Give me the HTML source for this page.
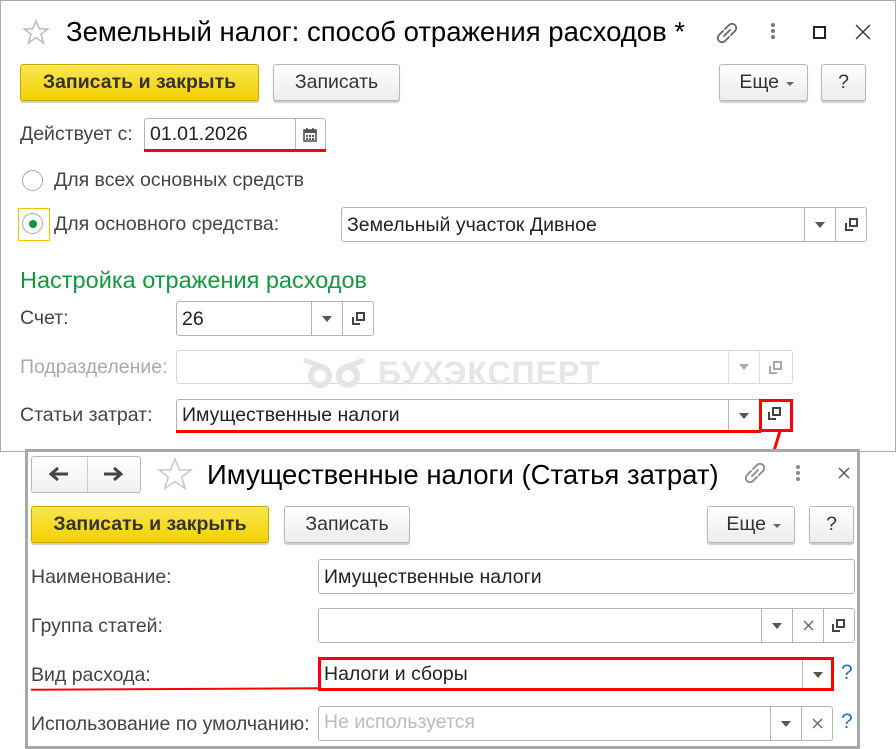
<!DOCTYPE html>
<html><head><meta charset="utf-8"><style>
*{box-sizing:border-box;margin:0;padding:0}
body{width:896px;height:748px;background:#fff;position:relative;overflow:hidden;font-family:"Liberation Sans",Arial,sans-serif;color:#333}
.a{position:absolute}
.win{position:absolute;border:1px solid #b0b0b0;background:#fff}
.title{position:absolute;font-size:27.5px;color:#000;white-space:nowrap}
.btn{position:absolute;border:1px solid #b8b8b8;border-radius:3px;background:linear-gradient(#fff,#ececec);box-shadow:0 2px 1px #ccc;font-size:19.5px;color:#333;text-align:center;line-height:34px}
.yel{background:linear-gradient(#fbe651,#f2d100);border-color:#c9a900;font-weight:bold;color:#333}
.lbl{position:absolute;font-size:19.5px;color:#444;white-space:nowrap}
.inp{position:absolute;border:1px solid #b4b4b4;border-radius:3px;background:#fff;font-size:19.5px;color:#222;padding-left:5px;line-height:31px;white-space:nowrap}
.sep{position:absolute;top:0;bottom:0;border-left:1px solid #b4b4b4}
.tri{position:absolute;width:0;height:0;border-left:5px solid transparent;border-right:5px solid transparent;border-top:6px solid #555}
.red{position:absolute;background:#f00}
</style></head><body>

<div class="win" style="left:0;top:0;width:896px;height:452px;border-color:#a8a8a8"></div>
<svg class="a" style="left:22px;top:19px" width="28" height="27" viewBox="0 0 28 27"><path d="M14 2l3.4 8h8.3l-6.8 5.2 2.6 8.6L14 18.7 6.5 23.8l2.6-8.6L2.3 10h8.3z" fill="none" stroke="#b9bec4" stroke-width="1.6"/></svg>
<div class="title" style="left:66px;top:16px">Земельный налог: способ отражения расходов *</div>
<svg class="a" style="left:713px;top:20px" width="28" height="26" viewBox="0 0 28 26"><g fill="none" stroke="#666" stroke-width="1.8" stroke-linecap="round"><path d="M12 9l4-4a4 4 0 0 1 6 6l-4 4"/><path d="M16 17l-4 4a4 4 0 0 1-6-6l4-4"/><path d="M11 16l6-6"/></g></svg>
<div class="a" style="left:771px;top:23px;width:4px;height:4px;border-radius:2px;background:#777;box-shadow:0 6px 0 #777,0 12px 0 #777"></div>
<div class="a" style="left:813px;top:26px;width:13px;height:13px;border:2px solid #222"></div>
<svg class="a" style="left:855px;top:24px" width="16" height="16"><path d="M1 1l14 14M15 1L1 15" stroke="#333" stroke-width="1.4"/></svg>

<div class="btn yel" style="left:20px;top:64px;width:239px;height:37px">Записать и закрыть</div>
<div class="btn" style="left:273px;top:64px;width:127px;height:37px">Записать</div>
<div class="btn" style="left:719px;top:64px;width:89px;height:37px;padding-right:28px;text-align:right">Еще<span class="tri" style="right:13px;top:17px;border-width:4px 4px 0 4px;border-top-color:#666"></span></div>
<div class="btn" style="left:821px;top:64px;width:45px;height:37px">?</div>

<div class="lbl" style="left:20px;top:123px">Действует с:</div>
<div class="inp" style="left:144px;top:118px;width:182px;height:34px;border-radius:3px 3px 0 0">01.01.2026<div class="sep" style="left:150px"></div>
<svg class="a" style="left:158px;top:8px" width="14" height="15"><rect x="1" y="3" width="12" height="11" fill="none" stroke="#555" stroke-width="1.6"/><rect x="1" y="3" width="12" height="3" fill="#555"/><path d="M4 1v3M10 1v3" stroke="#555" stroke-width="1.6"/><g fill="#555"><rect x="3" y="8" width="2" height="2"/><rect x="6" y="8" width="2" height="2"/><rect x="9" y="8" width="2" height="2"/><rect x="3" y="11" width="2" height="2"/><rect x="6" y="11" width="2" height="2"/><rect x="9" y="11" width="2" height="2"/></g></svg></div>
<div class="red" style="left:144px;top:149px;width:182px;height:3px"></div>

<div class="a" style="left:22px;top:170px;width:21px;height:21px;border-radius:50%;border:1px solid #aaa;background:#fff"></div>
<div class="lbl" style="left:54px;top:169px">Для всех основных средств</div>
<div class="a" style="left:18px;top:208px;width:32px;height:33px;border:1px solid #f2c200"></div>
<div class="a" style="left:22px;top:213px;width:21px;height:21px;border-radius:50%;border:1px solid #aaa;background:#fff"></div>
<div class="a" style="left:29px;top:220px;width:8px;height:8px;border-radius:50%;background:#0a9a3a"></div>
<div class="lbl" style="left:54px;top:213px">Для основного средства:</div>
<div class="inp" style="left:341px;top:207px;width:526px;height:35px;line-height:34px">Земельный участок Дивное
<div class="sep" style="left:462px"></div><div class="sep" style="left:493px"></div>
<span class="tri" style="left:473px;top:14px"></span>
<svg class="a" style="left:502px;top:9px" width="15" height="15"><path d="M2 6v7h7" fill="none" stroke="#444" stroke-width="2"/><rect x="6" y="2" width="7" height="7" fill="none" stroke="#444" stroke-width="2"/></svg></div>

<div class="a" style="left:20px;top:267px;font-size:23.5px;color:#109a3e">Настройка отражения расходов</div>

<div class="lbl" style="left:20px;top:307px">Счет:</div>
<div class="inp" style="left:176px;top:301px;width:198px;height:35px;line-height:34px">26
<div class="sep" style="left:134px"></div><div class="sep" style="left:165px"></div>
<span class="tri" style="left:145px;top:14px"></span>
<svg class="a" style="left:174px;top:9px" width="15" height="15"><path d="M2 6v7h7" fill="none" stroke="#444" stroke-width="2"/><rect x="6" y="2" width="7" height="7" fill="none" stroke="#444" stroke-width="2"/></svg></div>

<div class="lbl" style="left:20px;top:356px;color:#aaa">Подразделение:</div>
<div class="inp" style="left:176px;top:350px;width:617px;height:34px;border-color:#d6d6d6">
<div class="sep" style="left:551px;border-color:#ddd"></div><div class="sep" style="left:582px;border-color:#ddd"></div>
<span class="tri" style="left:562px;top:13px;border-top-color:#aaa"></span>
<svg class="a" style="left:591px;top:9px" width="15" height="15"><path d="M2 6v7h7" fill="none" stroke="#aaa" stroke-width="2"/><rect x="6" y="2" width="7" height="7" fill="none" stroke="#aaa" stroke-width="2"/></svg></div>
<svg class="a" style="left:300px;top:356px" width="70" height="36"><g fill="none" stroke="#e4e4e8" stroke-width="6"><circle cx="20" cy="20" r="9"/><circle cx="48" cy="20" r="9"/></g><path d="M4 4q10 4 16 6M64 4q-10 4-16 6" stroke="#e4e4e8" stroke-width="5" fill="none"/></svg>
<div class="a" style="left:378px;top:355px;font-size:32px;font-weight:bold;color:#e6e6ea;letter-spacing:1px">БУХЭКСПЕРТ</div>

<div class="lbl" style="left:20px;top:404px">Статьи затрат:</div>
<div class="inp" style="left:176px;top:399px;width:585px;height:34px">Имущественные налоги
<div class="sep" style="left:551px"></div>
<span class="tri" style="left:562px;top:13px"></span></div>
<div class="red" style="left:176px;top:430px;width:585px;height:3px"></div>
<div class="a" style="left:759px;top:399px;width:34px;height:33px;border:3px solid #f00;background:#fff"></div>
<svg class="a" style="left:767px;top:406px" width="15" height="15"><path d="M2 6v7h7" fill="none" stroke="#444" stroke-width="2"/><rect x="6" y="2" width="7" height="7" fill="none" stroke="#444" stroke-width="2"/></svg>
<svg class="a" style="left:770px;top:430px" width="14" height="22"><path d="M10 1L4 21" stroke="#f00" stroke-width="3"/></svg>

<div class="win" style="left:25px;top:449px;width:835px;height:300px;border:3px solid #a8a8a8"></div>
<div class="btn" style="left:31px;top:456px;width:110px;height:37px;box-shadow:none;background:linear-gradient(#fff,#f0f0f0)"></div>
<div class="a" style="left:87px;top:457px;height:35px;border-left:1px solid #ccc"></div>
<svg class="a" style="left:48px;top:466px" width="22" height="16"><path d="M20 8H4M10 2L3 8l7 6" fill="none" stroke="#444" stroke-width="3"/></svg>
<svg class="a" style="left:102px;top:466px" width="22" height="16"><path d="M2 8h16M12 2l7 6-7 6" fill="none" stroke="#444" stroke-width="3"/></svg>
<svg class="a" style="left:156px;top:457px" width="38" height="36" viewBox="0 0 38 36"><path d="M19 2l4.6 11h11.3l-9.2 7 3.5 11.5L19 24.6 8.8 31.5l3.5-11.5-9.2-7h11.3z" fill="none" stroke="#c4c8cd" stroke-width="1.5"/></svg>
<div class="title" style="left:207px;top:459px">Имущественные налоги (Статья затрат)</div>
<svg class="a" style="left:741px;top:460px" width="28" height="26" viewBox="0 0 28 26"><g fill="none" stroke="#888" stroke-width="1.8" stroke-linecap="round"><path d="M12 9l4-4a4 4 0 0 1 6 6l-4 4"/><path d="M16 17l-4 4a4 4 0 0 1-6-6l4-4"/><path d="M11 16l6-6"/></g></svg>
<div class="a" style="left:796px;top:465px;width:4px;height:4px;border-radius:2px;background:#888;box-shadow:0 6px 0 #888,0 12px 0 #888"></div>
<svg class="a" style="left:838px;top:467px" width="12" height="12"><path d="M1 1l10 10M11 1L1 11" stroke="#555" stroke-width="1.4"/></svg>

<div class="btn yel" style="left:31px;top:506px;width:238px;height:37px">Записать и закрыть</div>
<div class="btn" style="left:284px;top:506px;width:126px;height:37px">Записать</div>
<div class="btn" style="left:707px;top:506px;width:88px;height:37px;padding-right:28px;text-align:right">Еще<span class="tri" style="right:13px;top:17px;border-width:4px 4px 0 4px;border-top-color:#666"></span></div>
<div class="btn" style="left:809px;top:506px;width:45px;height:37px">?</div>

<div class="lbl" style="left:31px;top:566px">Наименование:</div>
<div class="inp" style="left:318px;top:559px;width:537px;height:35px;line-height:34px">Имущественные налоги</div>

<div class="lbl" style="left:31px;top:615px">Группа статей:</div>
<div class="inp" style="left:318px;top:608px;width:537px;height:35px">
<div class="sep" style="left:442px"></div><div class="sep" style="left:473px"></div><div class="sep" style="left:504px"></div>
<span class="tri" style="left:453px;top:14px"></span>
<svg class="a" style="left:484px;top:11px" width="11" height="11"><path d="M1 1l9 9M10 1L1 10" stroke="#666" stroke-width="1.4"/></svg>
<svg class="a" style="left:512px;top:9px" width="15" height="15"><path d="M2 6v7h7" fill="none" stroke="#444" stroke-width="2"/><rect x="6" y="2" width="7" height="7" fill="none" stroke="#444" stroke-width="2"/></svg></div>

<div class="lbl" style="left:31px;top:664px">Вид расхода:</div>
<div class="inp" style="left:318px;top:657px;width:516px;height:34px;border:3px solid #f00;border-radius:0;line-height:29px;padding-left:3px">Налоги и сборы
<div class="sep" style="left:481px"></div>
<span class="tri" style="left:492px;top:12px"></span></div>
<div class="red" style="left:31px;top:688px;width:288px;height:2px;transform:rotate(-0.3deg)"></div>
<div class="a" style="left:841px;top:661px;font-size:21px;color:#1a73c9">?</div>

<div class="lbl" style="left:31px;top:713px">Использование по умолчанию:</div>
<div class="inp" style="left:318px;top:706px;width:515px;height:35px;color:#bbb">Не используется
<div class="sep" style="left:451px"></div><div class="sep" style="left:482px"></div>
<span class="tri" style="left:462px;top:14px"></span>
<svg class="a" style="left:493px;top:11px" width="11" height="11"><path d="M1 1l9 9M10 1L1 10" stroke="#666" stroke-width="1.4"/></svg></div>
<div class="a" style="left:841px;top:710px;font-size:21px;color:#1a73c9">?</div>

</body></html>
